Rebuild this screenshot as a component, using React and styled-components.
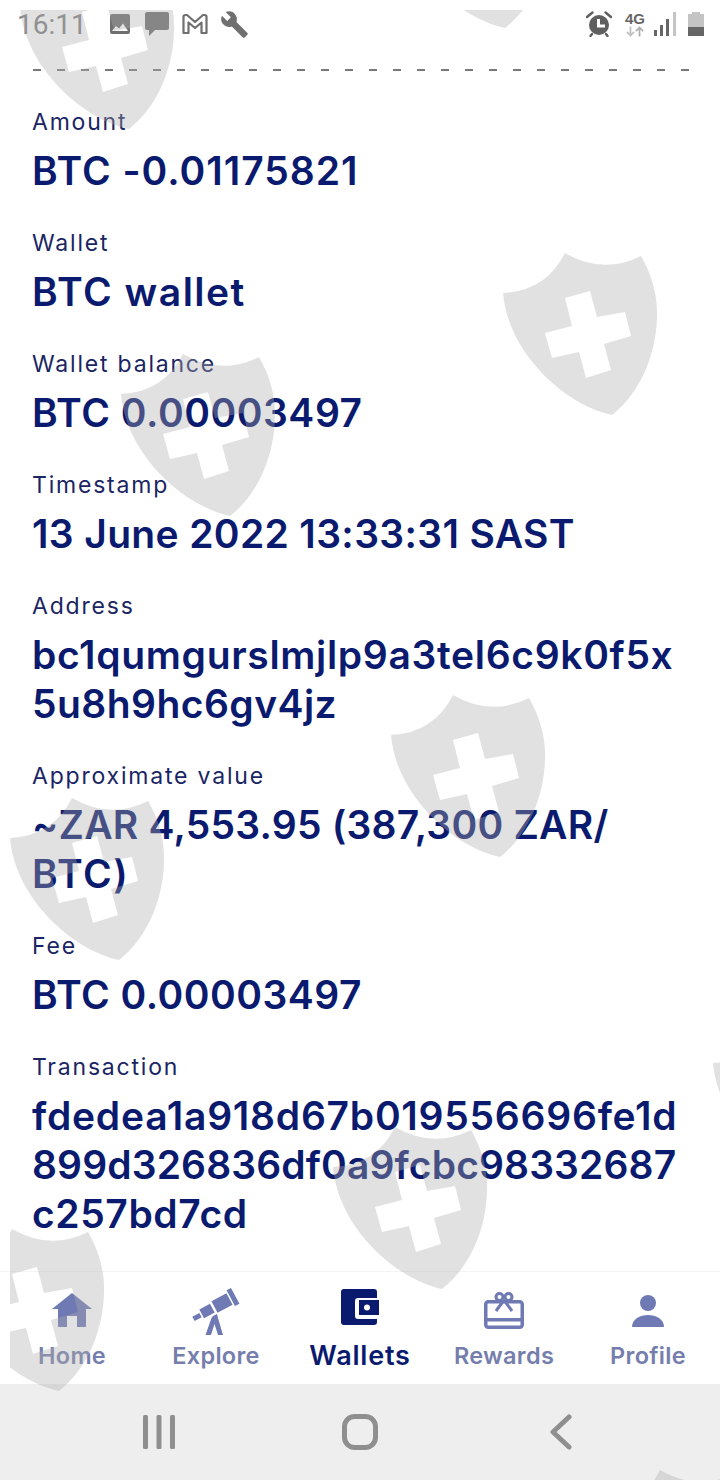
import React from 'react'
import styled, { createGlobalStyle } from 'styled-components'
import { MdBuild } from 'react-icons/md'

const GlobalStyle = createGlobalStyle`
  html, body {
    margin: 0;
    padding: 0;
    background: #ffffff;
  }
`

const Page = styled.div`
  position: relative;
  width: 720px;
  height: 1480px;
  overflow: hidden;
  background: #ffffff;
  font-family: Inter, "Liberation Sans", sans-serif;
  color: #0a1a6e;
`

const StatusBar = styled.div`
  height: 48px;
  padding: 0 16px 0 17px;
  display: flex;
  align-items: center;
  color: #6f6f6f;
`

const Clock = styled.span`
  font-family: Roboto, sans-serif;
  font-size: 28px;
  color: #808080;
  width: 92px;
`

const StatusIcons = styled.div`
  display: flex;
  align-items: center;
  gap: ${p => p.$gap}px;
`

const Spacer = styled.div`
  flex: 1;
`

const FourG = styled.div`
  width: 18px;
  margin: 0 -2px 0 2px;
  display: flex;
  flex-direction: column;
  align-items: center;
  font-family: "Liberation Sans", sans-serif;
  font-weight: 700;
  font-size: 15px;
  line-height: 14px;
  color: #666666;
  svg {
    display: block;
  }
`

const Details = styled.main`
  height: 1223px;
  padding: 0 32px;
  overflow: hidden;
`

const Dashes = styled.div`
  margin: 21px -1px 0 1px;
  height: 2px;
  background: repeating-linear-gradient(to right, #7a7a7a 0 8px, transparent 8px 24px);
`

const Fields = styled.div`
  margin-top: 39px;
`

const Field = styled.div`
  margin-bottom: 36px;
`

const Label = styled.div`
  font-size: 23px;
  line-height: 25px;
  letter-spacing: 1.8px;
  color: #1a2563;
  margin-bottom: 11px;
`

const Value = styled.div`
  font-size: 39px;
  font-weight: 600;
  line-height: 49px;
  letter-spacing: ${p => p.$spacing}px;
  white-space: nowrap;
`

const TabBar = styled.nav`
  height: 112px;
  border-top: 1px solid #f4f4f4;
  display: grid;
  grid-template-columns: repeat(5, 144px);
`

const Tab = styled.div`
  display: flex;
  flex-direction: column;
  align-items: center;
  padding-top: 15px;
  color: ${p => p.$active ? '#0a1a6e' : '#6f79b3'};
`

const TabIcon = styled.div`
  height: 48px;
  display: flex;
  align-items: center;
  justify-content: center;
`

const TabLabel = styled.span`
  margin-top: 5px;
  font-size: ${p => p.$active ? '27px' : '23.5px'};
  font-weight: 600;
  line-height: 32px;
  letter-spacing: ${p => p.$active ? '0.8px' : '0.3px'};
  color: ${p => p.$active ? '#0a1a6e' : '#757eac'};
`

const SystemBar = styled.div`
  height: 96px;
  background: #eeeeee;
  padding: 0 59px;
  display: grid;
  grid-template-columns: repeat(3, 1fr);
  align-items: center;
  justify-items: center;
`

const Watermark = styled.svg`
  position: absolute;
  top: 10px;
  left: 10px;
  pointer-events: none;
`

const SHIELD = 'M62 0Q100 22 138 3C148 20 155 42 154 64C153 105 135 142 109 162C62 152 5 100 0 40Q43 38 62 0Z' +
  'M62 45L87 38L94 64L122 59L128 83L101 91L108 117L83 125L76 99L49 105L42 80L69 73Z'

const shields = [
  [20, -33], [396, -134], [503, 253], [121, 354], [391, 695],
  [10, 798], [713, 1023], [333, 1127], [-50, 1229], [598, 1470],
]

// each line carries its own tracking so the line ends land where they should
const fields = [
  { label: 'Amount', lines: [['BTC -0.01175821', 0.97]] },
  { label: 'Wallet', lines: [['BTC wallet', 1.5]] },
  { label: 'Wallet balance', lines: [['BTC 0.00003497', 0.55]] },
  { label: 'Timestamp', lines: [['13 June 2022 13:33:31 SAST', 0.35]] },
  { label: 'Address', lines: [['bc1qumgurslmjlp9a3tel6c9k0f5x', 0.67], ['5u8h9hc6gv4jz', 0.45]] },
  { label: 'Approximate value', lines: [['~ZAR 4,553.95 (387,300 ZAR/', 0.24], ['BTC)', 1.5]] },
  { label: 'Fee', lines: [['BTC 0.00003497', 0.5]] },
  { label: 'Transaction', lines: [['fdedea1a918d67b019556696fe1d', 0.75], ['899d326836df0a9fcbc98332687', 0.13], ['c257bd7cd', 0.6]] },
]

const ImageIcon = () => (
  <svg width="22" height="22" viewBox="0 0 22 22">
    <rect x="1" y="1" width="20" height="20" rx="2" fill="#6f6f6f" />
    <path d="M3 18L7 13L10 15.5L14 10.5L19 18Z" fill="#ffffff" />
  </svg>
)

const ChatIcon = () => (
  <svg width="26" height="26" viewBox="0 0 26 26">
    <path d="M3 1H23Q25 1 25 3V17Q25 19 23 19H11L5 25V19H3Q1 19 1 17V3Q1 1 3 1Z" fill="#6f6f6f" />
  </svg>
)

const MailIcon = () => (
  <svg width="28" height="22" viewBox="0 0 28 22" fill="none" stroke="#6f6f6f" strokeWidth="2.2" strokeLinejoin="round" style={{ marginLeft: -2, marginRight: 1 }}>
    <path d="M2.5 3.5Q2.5 2 4.5 2H6L14 9L22 2H23.5Q25.5 2 25.5 3.5V20H20.5V9.5L14 15L7.5 9.5V20H2.5Z" />
  </svg>
)

const AlarmIcon = () => (
  <svg width="26" height="26" viewBox="0 0 26 26">
    <circle cx="13" cy="14" r="10" fill="#5f5f5f" />
    <path d="M1 6L6.5 1.5M25 6L19.5 1.5M6 23L4.5 25M20 23L21.5 25" stroke="#5f5f5f" strokeWidth="2.4" strokeLinecap="round" />
    <path d="M12.5 8V15H19" fill="none" stroke="#ffffff" strokeWidth="3" />
  </svg>
)

const SignalIcon = () => (
  <svg width="22" height="24" viewBox="0 0 22 24">
    <rect x="0" y="18" width="3" height="6" fill="#666666" />
    <rect x="6" y="13" width="3" height="11" fill="#666666" />
    <rect x="12" y="7" width="3" height="17" fill="#666666" />
    <rect x="19" y="0" width="3" height="24" fill="#c4c4c4" />
  </svg>
)

const BatteryIcon = () => (
  <svg width="16" height="24" viewBox="0 0 16 24">
    <rect x="4" y="0" width="8" height="2" fill="#c4c4c4" />
    <rect x="0" y="2" width="16" height="13" fill="#c4c4c4" />
    <rect x="0" y="15" width="16" height="9" fill="#666666" />
  </svg>
)

const HomeIcon = () => (
  <svg width="40" height="36" viewBox="0 0 40 36" fill="currentColor">
    <path fillRule="evenodd" d="M0 16L20 0L40 16H34V34H6V16ZM15 23V34H25V23Z" />
  </svg>
)

const TelescopeIcon = () => (
  <svg width="48" height="48" viewBox="0 0 48 48" fill="currentColor">
    <rect x="1" y="27.5" width="8" height="5" transform="rotate(-28 5 30)" />
    <rect x="9" y="19" width="12" height="10" transform="rotate(-28 15 24)" />
    <rect x="21.5" y="9.5" width="17" height="13" transform="rotate(-28 30 16)" />
    <rect x="38.5" y="1" width="5" height="18" transform="rotate(-28 41 10)" />
    <path d="M21 29L25 27L26 31L31 48H26L22.5 37L19 48H13.5L19.5 31Z" />
  </svg>
)

const WalletIcon = () => (
  <svg width="38" height="44" viewBox="0 0 38 44">
    <rect width="36" height="36" rx="3" fill="currentColor" />
    <rect x="14" y="9" width="24" height="21" rx="3" fill="#ffffff" />
    <rect x="18" y="11" width="20" height="15" fill="currentColor" />
    <circle cx="26" cy="18.5" r="3" fill="#ffffff" />
  </svg>
)

const GiftIcon = () => (
  <svg width="40" height="38" viewBox="0 0 40 38" fill="none" stroke="currentColor" strokeWidth="3">
    <rect x="1.75" y="9.75" width="36.5" height="25.5" rx="2.5" strokeWidth="3.5" />
    <rect x="1" y="26" width="38" height="3.5" fill="currentColor" strokeWidth="0" />
    <circle cx="15.5" cy="5" r="3.5" />
    <circle cx="24.5" cy="5" r="3.5" />
    <path d="M20 8L12 19M20 8L28 19" />
  </svg>
)

const PersonIcon = () => (
  <svg width="32" height="32" viewBox="0 0 32 32" fill="currentColor">
    <circle cx="16" cy="8" r="8" />
    <path d="M0 32C0 24 8 20 16 20S32 24 32 32Z" />
  </svg>
)

const tabs = [
  { name: 'Home', icon: <HomeIcon /> },
  { name: 'Explore', icon: <TelescopeIcon /> },
  { name: 'Wallets', icon: <WalletIcon />, active: true },
  { name: 'Rewards', icon: <GiftIcon /> },
  { name: 'Profile', icon: <PersonIcon /> },
]

export default function App() {
  return (
    <Page>
      <GlobalStyle />
      <StatusBar>
        <Clock>16:11</Clock>
        <StatusIcons $gap={13}>
          <ImageIcon />
          <ChatIcon />
          <MailIcon />
          <MdBuild size={29} style={{ marginLeft: -3 }} />
        </StatusIcons>
        <Spacer />
        <StatusIcons $gap={12}>
          <AlarmIcon />
          <FourG>
            4G
            <svg width="18" height="11" viewBox="0 0 20 11" fill="none" strokeWidth="2">
              <path d="M5 0V10M1 6L5 10L9 6" stroke="#c0c0c0" />
              <path d="M15 11V1M11 5L15 1L19 5" stroke="#b0b0b0" />
            </svg>
          </FourG>
          <SignalIcon />
          <BatteryIcon />
        </StatusIcons>
      </StatusBar>
      <Details>
        <Dashes />
        <Fields>
          {fields.map(f => (
            <Field key={f.label}>
              <Label>{f.label}</Label>
              {f.lines.map(([line, spacing]) => <Value key={line} $spacing={spacing}>{line}</Value>)}
            </Field>
          ))}
        </Fields>
      </Details>
      <TabBar>
        {tabs.map(t => (
          <Tab key={t.name} $active={t.active}>
            <TabIcon>{t.icon}</TabIcon>
            <TabLabel $active={t.active}>{t.name}</TabLabel>
          </Tab>
        ))}
      </TabBar>
      <SystemBar>
        <svg width="32" height="34" viewBox="0 0 32 34" fill="#8f8f8f">
          <rect x="0" y="0" width="5" height="34" rx="1.5" />
          <rect x="13.5" y="0" width="5" height="34" rx="1.5" />
          <rect x="27" y="0" width="5" height="34" rx="1.5" />
        </svg>
        <svg width="36" height="36" viewBox="0 0 36 36" fill="none" stroke="#8f8f8f" strokeWidth="5">
          <rect x="2.5" y="2.5" width="31" height="31" rx="10" />
        </svg>
        <svg width="24" height="36" viewBox="0 0 24 36" fill="none" stroke="#8f8f8f" strokeWidth="5" strokeLinecap="round" strokeLinejoin="round">
          <path d="M20 3L4 18L20 33" />
        </svg>
      </SystemBar>
      <Watermark width="710" height="1470" viewBox="10 10 710 1470">
        {shields.map(([x, y]) => (
          <path key={`${x}-${y}`} d={SHIELD} transform={`translate(${x} ${y})`} fill="#adadad" fillOpacity="0.37" fillRule="evenodd" />
        ))}
      </Watermark>
    </Page>
  )
}
